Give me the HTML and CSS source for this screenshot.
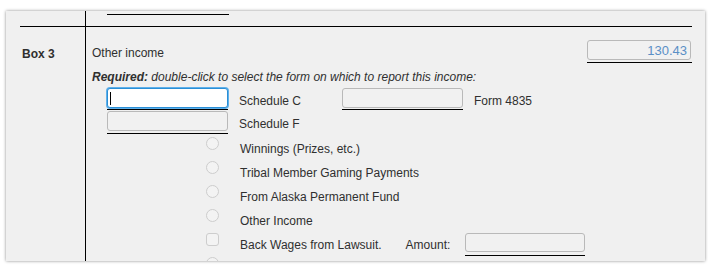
FILE: index.html
```
<html>

<head>
	<link rel="stylesheet" href="styles.css">
</head>

<body>
	<div id="div_panel">
		<!-- tail of the previous box, cut off at the top -->
		<div class="row_top">
			<div class="col_label"><div class="rule"></div></div>
			<div class="col_body">
				<div class="prev_line"></div>
				<div class="rule rule_right"></div>
			</div>
		</div>

		<div class="row_main">
			<div class="col_label">
				<p class="box_name">Box 3</p>
			</div>
			<div class="col_body">
				<div class="income_row">
					<span class="income_label">Other income</span>
					<div class="field field_amount">
						<input type="text" class="txt txt_value" value="130.43">
					</div>
				</div>

				<p class="required"><b>Required:</b> double-click to select the form on which to report this income:</p>

				<div class="form_row">
					<div class="field field_form focus">
						<input type="text" class="txt txt_focus">
						<span class="caret"></span>
					</div>
					<span class="form_name">Schedule C</span>
					<div class="field field_form">
						<input type="text" class="txt">
					</div>
					<span class="form_name">Form 4835</span>
				</div>
				<div class="form_row form_row2">
					<div class="field field_form">
						<input type="text" class="txt">
					</div>
					<span class="form_name">Schedule F</span>
				</div>

				<div class="option"><span class="radio"></span><span class="opt_text">Winnings (Prizes, etc.)</span></div>
				<div class="option"><span class="radio"></span><span class="opt_text">Tribal Member Gaming Payments</span></div>
				<div class="option"><span class="radio"></span><span class="opt_text">From Alaska Permanent Fund</span></div>
				<div class="option"><span class="radio"></span><span class="opt_text">Other Income</span></div>
				<div class="option">
					<span class="check"></span><span class="opt_text">Back Wages from Lawsuit.</span>
					<span class="amount_label">Amount:</span>
					<div class="field field_small">
						<input type="text" class="txt txt_small">
					</div>
				</div>
				<div class="option"><span class="radio"></span><span class="opt_text"></span></div>
			</div>
		</div>
	</div>
</body>

</html>
```

FILE: styles.css
```
body {
	margin: 0;
	padding: 11px 3px 0 6px;
	background-color: #ffffff;
	font-family: "Liberation Sans", Arial, sans-serif;
	font-size: 12px;
	color: #2f2f2f;
}

#div_panel {
	width: 699px;
	height: 250px;
	overflow: hidden;
	background-color: #f0f0f0;
	box-shadow: 0 0 3px rgba(0, 0, 0, 0.45);
}

.row_top,
.row_main {
	display: flex;
}

.row_top {
	height: 16px;
}

.row_main {
	height: 234px;
}

.col_label {
	width: 79px;
	border-right: 1px solid #000;
	display: flex;
	flex-direction: column;
}

.col_body {
	flex: 1;
	display: flex;
	flex-direction: column;
	padding-left: 6px;
}

/* rows keep their height even if the panel cuts them off */
.col_body > * {
	flex-shrink: 0;
}

.row_top .col_body {
	padding-left: 0;
}

/* black line between two boxes */
.rule {
	margin-top: auto;
	margin-left: 14px;
	border-bottom: 1px solid #000;
}

.rule_right {
	margin-left: 0;
	margin-right: 13px;
}

.prev_line {
	margin-top: 3px;
	margin-left: 21px;
	width: 122px;
	border-top: 1px solid #000;
}

.box_name {
	margin: 20px 0 0 16px;
	font-weight: bold;
	line-height: 14px;
}

.income_row {
	display: flex;
	justify-content: space-between;
	align-items: center;
	margin-top: 13px;
	margin-right: 13px;
}

.income_label {
	padding-top: 3px;
}

.required {
	margin: 7px 0 0 0;
	font-style: italic;
	line-height: 15px;
}

/* input with a black line below it */
.field {
	position: relative;
	border-bottom: 1px solid #000;
	padding-bottom: 2px;
}

.txt {
	display: block;
	box-sizing: border-box;
	width: 100%;
	height: 20px;
	margin: 0;
	border: 1px solid #b9b9b9;
	border-radius: 3px;
	background-color: #f1f1f1;
	font-family: "Liberation Sans", Arial, sans-serif;
	outline: none;
}

.field_amount {
	width: 105px;
}

.txt_value {
	width: 104px;
	text-align: right;
	padding: 0 3px 0 0;
	color: #5a8fc6;
	font-size: 13px;
}

.txt_focus {
	background-color: #ffffff;
	border: 1px solid #2a8fd6;
	box-shadow: 0 0 0 1px #5fb0ea;
}

.caret {
	position: absolute;
	left: 3px;
	top: 4px;
	width: 1px;
	height: 13px;
	background-color: #000;
}

.form_row {
	display: flex;
	align-items: flex-start;
	margin-top: 3px;
	margin-left: 15px;
}

.form_row2 {
	margin-top: 1px;
	margin-bottom: 2px;
}

.field_form {
	width: 121px;
	padding-bottom: 1px;
}

.form_row2 .field_form {
	padding-bottom: 2px;
}

.field_form + .form_name {
	margin-left: 11px;
	width: 103px;
	margin-top: 6px;
}

.form_name {
	margin-top: 6px;
	margin-left: 12px;
}

.option {
	display: flex;
	align-items: center;
	height: 24px;
	margin-left: 114px;
}

.radio,
.check {
	align-self: flex-start;
	box-sizing: border-box;
	width: 13px;
	height: 13px;
	margin-top: 1px;
	border: 1px solid #cdcdcd;
	background-color: #f3f3f3;
}

.radio {
	border-radius: 50%;
}

.check {
	border-radius: 3px;
}

.opt_text {
	margin-left: 21px;
	padding-top: 1px;
}

.amount_label {
	margin-left: 24px;
	padding-top: 1px;
}

.field_small {
	width: 120px;
	margin-left: 15px;
	align-self: flex-start;
	margin-top: 1px;
	padding-bottom: 3px;
}

.txt_small {
	height: 19px;
}
```
